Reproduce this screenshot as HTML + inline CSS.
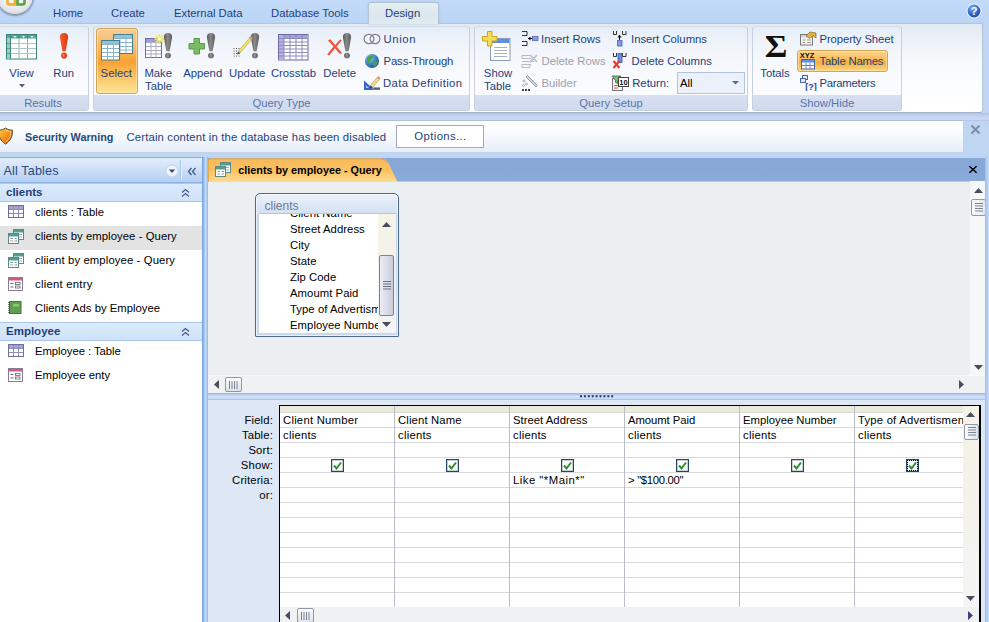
<!DOCTYPE html>
<html>
<head>
<meta charset="utf-8">
<title>clients by employee - Query</title>
<style>
*{box-sizing:border-box;margin:0;padding:0}
html,body{width:989px;height:622px;overflow:hidden}
body{background:#bfd6f3;font-family:"Liberation Sans",sans-serif;font-size:11px;color:#1d3f7c;position:relative}
.abs{position:absolute}
.t{position:absolute;white-space:nowrap;line-height:13px}
/* top tab row */
#tabrow{left:0;top:0;width:989px;height:23px;background:linear-gradient(#c3dafa,#bcd5f5)}
#orb{left:-4px;top:-23px;width:38px;height:38px;border-radius:50%;background:radial-gradient(circle at 50% 40%,#fff 0,#e9edf2 55%,#c8ced8 100%);border:1.500px solid #8595a3;box-shadow:0 1px 2px rgba(70,95,120,.6)}
.tab{font-size:11.3px;color:#1d3f7c;top:7px;z-index:3}
#dtab{left:368px;top:2px;width:71px;height:22px;border:1px solid #b0c6d6;border-bottom:none;border-radius:3px 3px 0 0;background:linear-gradient(#e6eff2 0,#dae7ec 55%,#dfeaf0 100%);z-index:2;box-shadow:0 0 2px rgba(120,150,190,.45)}
/* ribbon */
#ribbon{left:0;top:23px;width:983px;height:90px;background:linear-gradient(#e2ebf1 0,#ecf2f8 20%,#f8fafd 45%,#fff 100%);border-top:1px solid #b4c6d6;border-bottom:1px solid #a3b4c4;border-right:1px solid #b4c6d6;border-radius:0 0 3px 0}
.grp{position:absolute;top:26px;height:85px;border:1px solid #c6d0de;border-top-color:#d6dee9;border-radius:3px;background:linear-gradient(#e4ecf7 0,#eef3fa 15%,#f7f9fd 50%,#fbfcfe 80%);overflow:hidden}
.grp .lab{position:absolute;left:0;right:0;bottom:0;height:15px;background:linear-gradient(#d7dff1,#d1dbef);color:#5876a6;text-align:center;font-size:11.3px;line-height:16px}
.grp .in{position:absolute;left:0;top:0;right:0;bottom:0;border:1px solid rgba(255,255,255,.75);border-radius:2px;pointer-events:none}
.rt{position:absolute;white-space:nowrap;font-size:11.3px;line-height:13px;color:#1d3f7c}
.rt.c{text-align:center;transform:translateX(-50%)}
.rt.dis{color:#9aa2ad}
.hot{position:absolute;border:1px solid #cfa657;border-radius:3px;background:linear-gradient(#f8cb92 0,#fab860 30%,#f9a335 52%,#fbc465 75%,#fde496 100%);box-shadow:inset 0 0 0 1px rgba(255,235,190,.55)}
/* strip under ribbon */
#strip{left:0;top:113px;width:989px;height:8px;background:linear-gradient(#b2c4e5 0,#c6d4f2 45%,#cbd9f6 80%,#adc0df 100%)}
/* security bar */
#sec{left:0;top:120px;width:964px;height:33px;background:linear-gradient(#fff 0,#f7fafd 45%,#edf3fb 75%,#e4edf9 100%);border:1px solid #c3d3ea;border-top-color:#aebfdc;border-left:none}
#optbtn{left:396px;top:125px;width:88px;height:23px;border:1px solid #a3acb9;background:#fff;text-align:center;line-height:21px;font-size:11.3px;color:#1d3f7c;letter-spacing:.4px;padding-left:1px}
/* nav pane */
#nav{left:0;top:157px;width:202px;height:465px;background:#fff;border-top:1px solid #8fb0dc}
#navh{left:0;top:158px;width:202px;height:26px;background:linear-gradient(#e2edfc 0,#d2e2f9 40%,#bfd6f5 75%,#b4cef3 100%);border-bottom:2px solid #8db3e6}
.gh{position:absolute;left:0;width:202px;height:19px;background:linear-gradient(#dcebfd,#d0e2f9);border-top:1px solid #a9c6ec;border-bottom:1px solid #a9c6ec;font-weight:bold;font-size:11.5px;color:#1d3f7c;line-height:17px;padding-left:6px}
.ni{position:absolute;left:0;width:202px;height:24px;font-size:11.3px;color:#000;line-height:21px;padding-left:35px;white-space:nowrap}
.ni.sel{background:#e3e3e3}
.ico{position:absolute}
/* splitter between nav and doc */
#vsplit{left:202px;top:157px;width:6px;height:465px;background:linear-gradient(90deg,#6f9fdc 0,#a5c6f0 40%,#c9dffa 60%,#8db4e6 100%)}
/* doc */
#doctabs{left:208px;top:158px;width:777px;height:24px;background:linear-gradient(#86a7d7,#8aabd9);border-bottom:1px solid #b4c9e8}
#doc{left:208px;top:182px;width:777px;height:211px;background:#eceff2}
#rframe{left:985px;top:157px;width:4px;height:465px;background:linear-gradient(90deg,#9bbbe9 0,#b3cef2 45%,#c6dbf6 100%)}
#hsplit{left:208px;top:393px;width:777px;height:7px;background:linear-gradient(#8eb0e3 0,#b9d2f3 25%,#d5e4f9 55%,#c3d8f5 80%,#9dbce9 100%)}
#low{left:208px;top:400px;width:777px;height:222px;background:#dde7f5}
#grid{left:279px;top:405px;width:701px;height:203px;background:#fff;border-left:1px solid #000;border-top:1px solid #000;overflow:hidden}
.hl{position:absolute;left:0;width:700px;height:1px;background:#d7d9dd}
.vl{position:absolute;top:0;width:1px;height:203px;background:#b9bdca}
.gl{position:absolute;right:716px;font-size:11.3px;letter-spacing:.15px;color:#000;line-height:15px;white-space:nowrap}
.gt{position:absolute;font-size:11.3px;color:#000;line-height:15px;white-space:nowrap}
.cb{position:absolute;width:13px;height:13px;border:1px solid #24446e;background:#fff;box-shadow:inset 0 0 0 .5px rgba(36,68,110,.5)}
.sb{position:absolute;background:#f1f2f4}
.thumb{position:absolute;border:1px solid #8e99a8;border-radius:2px;background:linear-gradient(90deg,#f7f8fa,#dfe3ea)}
</style>
</head>
<body>
<div id="tabrow" class="abs"></div>
<div id="orb" class="abs"></div>
<svg class="ico" style="left:5px;top:0" width="22" height="8" viewBox="0 0 22 8"><path d="M2.500 -1v3.500q0 2 2 2h5.500v-5.500" fill="none" stroke="#f0ae2c" stroke-width="2.600"/><path d="M12.500 -1v5.500h5q2 0 2-2v-3.500" fill="none" stroke="#5da03a" stroke-width="2.600"/></svg>
<div id="dtab" class="abs"></div>
<div class="t tab" style="left:53px">Home</div>
<div class="t tab" style="left:111px">Create</div>
<div class="t tab" style="left:174px">External Data</div>
<div class="t tab" style="left:271px">Database Tools</div>
<div class="t tab" style="left:385px">Design</div>

<div id="ribbon" class="abs"></div>

<!-- groups -->
<div class="grp" style="left:-2px;width:91px"><div class="lab" style="padding-right:1px">Results</div></div>
<div class="grp" style="left:93px;width:377px"><div class="lab">Query Type</div></div>
<div class="grp" style="left:474px;width:274px"><div class="lab">Query Setup</div></div>
<div class="grp" style="left:752px;width:150px"><div class="lab">Show/Hide</div></div>

<!-- Results -->
<svg class="ico" style="left:6px;top:34px" width="31" height="26" viewBox="0 0 31 26">
<rect x="0.5" y="0.5" width="30" height="24.500" fill="#fff" stroke="#3a8276"/>
<rect x="1" y="1" width="29" height="3.500" fill="#57a396"/>
<rect x="1" y="4.500" width="3" height="20" fill="#9ccdc4"/>
<path d="M4.500 1V25" stroke="#3f8a7e" stroke-width="1" fill="none"/>
<path d="M13 4.500V25M21.500 4.500V25" stroke="#86aeb0" stroke-width="1" fill="none"/>
<path d="M13 1V4.500M21.500 1V4.500" stroke="#3f8a7e" stroke-width="1" fill="none"/>
<path d="M5 9.500H30M5 14.500H30M5 19.500H30" stroke="#b3c4c8" stroke-width="1" fill="none"/>
<path d="M1 9.500H4M1 14.500H4M1 19.500H4" stroke="#57a396" stroke-width="1"/>
<path d="M7.500 2l3 0l-1.500 2zM16 2l3 0l-1.500 2zM24.500 2l3 0l-1.500 2z" fill="#e8f5f2"/>
</svg>
<svg class="ico" style="left:58px;top:32px" width="12" height="28" viewBox="0 0 12 28">
<defs><linearGradient id="gg" x1="0" x2="1"><stop offset="0" stop-color="#585858"/><stop offset=".45" stop-color="#8a8a8a"/><stop offset="1" stop-color="#5c5c5c"/></linearGradient><linearGradient id="rg" x1="0" x2="1"><stop offset="0" stop-color="#f0622e"/><stop offset=".5" stop-color="#ee4a1f"/><stop offset="1" stop-color="#d83a14"/></linearGradient></defs>
<path d="M6 1C9 1 10.400 2.800 10.100 5.600L7.600 19.200H4.400L1.900 5.600C1.600 2.800 3 1 6 1Z" fill="url(#rg)"/>
<circle cx="6" cy="23.600" r="3.100" fill="url(#rg)"/>
<circle cx="5.6" cy="23.2" r="1" fill="#f58a5e"/>
</svg>
<div class="rt c" style="left:21.5px;top:67px">View</div>
<svg class="ico" style="left:19px;top:84px" width="6" height="4"><path d="M0 0h6l-3 3.5z" fill="#4c5f85"/></svg>
<div class="rt c" style="left:63.7px;top:67px">Run</div>

<!-- Query Type -->
<div class="hot" style="left:96px;top:28px;width:42px;height:66px"></div>
<svg class="ico" style="left:101px;top:34px" width="32" height="27" viewBox="0 0 32 27">
<g>
<rect x="12.5" y="0.5" width="19" height="19" fill="#fff" stroke="#3e8195"/>
<rect x="13" y="1" width="18" height="3.5" fill="#8fc2d6"/>
<path d="M13 4.5H31M13 8.5H31M13 12.5H31M13 16H31" stroke="#8bb4c6" stroke-width="1"/>
<path d="M19 4.5V19M25 4.5V19" stroke="#8bb4c6" stroke-width="1"/>
</g>
<g>
<rect x="0.5" y="6.5" width="18" height="19.5" fill="#fff" stroke="#3e8195"/>
<rect x="1" y="7" width="17" height="3.5" fill="#8fc2d6"/>
<path d="M1 10.5H18M1 14.5H18M1 18.5H18M1 22.5H18" stroke="#8bb4c6" stroke-width="1"/>
<path d="M6.5 10.5V26M12.5 10.5V26" stroke="#8bb4c6" stroke-width="1"/>
</g>
</svg>
<div class="rt c" style="left:116.3px;top:67px">Select</div>

<svg class="ico" style="left:144px;top:32px" width="30" height="28" viewBox="0 0 30 28">
<rect x="1.5" y="6.5" width="16" height="19" fill="#fff" stroke="#70709f"/>
<rect x="2" y="7" width="15" height="3.5" fill="#9a9cd8"/>
<path d="M2 10.5H17M2 14.5H17M2 18.5H17M2 22H17" stroke="#a9abc9" stroke-width="1"/>
<path d="M7 7V25.5M12 7V25.5" stroke="#a9abc9" stroke-width="1"/>
<path d="M15.5 2v10M10.5 7h10M12 3.5l7 7M19 3.5l-7 7" stroke="#f3e64a" stroke-width="1.6"/>
<circle cx="15.500" cy="7" r="1.800" fill="#fffbd0"/>
<path d="M24.0 1C27.0 1 28.4 2.800 28.1 5.600L25.6 19.200H22.4L19.9 5.600C19.6 2.800 21.0 1 24.0 1Z" fill="url(#gg)"/>
<circle cx="24" cy="23.600" r="2.900" fill="url(#gg)"/>
<circle cx="23.600" cy="23.200" r="1" fill="#9a9a9a"/>
</svg>
<div class="rt c" style="left:158.2px;top:67px">Make</div>
<div class="rt c" style="left:158.5px;top:80px">Table</div>

<svg class="ico" style="left:188px;top:32px" width="30" height="28" viewBox="0 0 30 28">
<path d="M6 6.500h5.500v5h5v5.500h-5v5h-5.500v-5h-5v-5.500h5z" fill="#7dba66" stroke="#5a9a48" stroke-width="1"/>
<path d="M23.0 1C26.0 1 27.4 2.800 27.1 5.600L24.6 19.200H21.4L18.9 5.600C18.6 2.800 20.0 1 23.0 1Z" fill="url(#gg)"/>
<circle cx="23" cy="23.600" r="2.900" fill="url(#gg)"/>
<circle cx="22.600" cy="23.200" r="1" fill="#9a9a9a"/>
</svg>
<div class="rt c" style="left:202.7px;top:67px">Append</div>

<svg class="ico" style="left:232px;top:32px" width="30" height="28" viewBox="0 0 30 28">
<path d="M23.0 1C26.0 1 27.4 2.800 27.1 5.600L24.6 19.200H21.4L18.9 5.600C18.6 2.800 20.0 1 23.0 1Z" fill="url(#gg)"/>
<circle cx="23" cy="23.600" r="2.900" fill="url(#gg)"/>
<circle cx="22.600" cy="23.200" r="1" fill="#9a9a9a"/>
<path d="M1.500 16.500h6M1.500 19h6M1.500 21.500h6M1.500 24h6" stroke="#555" stroke-width="1" stroke-dasharray="1 1.500"/>
<path d="M6.200 19.300L17.700 5.800l1.900 1.600L8.100 20.900z" fill="#f3e560" stroke="#9a8f4a" stroke-width=".5"/>
<path d="M17.500 6l1.500-1.800l2.300 1.900l-1.600 1.800z" fill="#d9a39a" stroke="#8a6a66" stroke-width=".5"/>
<path d="M6 19.500l-1 3l3.200-1.100z" fill="#444"/>
</svg>
<div class="rt c" style="left:247.200px;top:67px">Update</div>

<svg class="ico" style="left:278px;top:34px" width="31" height="27" viewBox="0 0 31 27">
<rect x="0.500" y="0.500" width="29.500" height="25.500" fill="#fff" stroke="#6d6ca6"/>
<rect x="1" y="1" width="28.500" height="3.500" fill="#a3a2d4"/>
<rect x="1" y="1" width="5" height="24.500" fill="#b3b2de"/>
<path d="M6 1V26M12 1V26M18 1V26M24 1V26" stroke="#8d8cc0" stroke-width="1"/>
<path d="M1 4.500H30M1 8H30M1 11.500H30M1 15H30M1 18.500H30M1 22H30" stroke="#8d8cc0" stroke-width="1"/>
</svg>
<div class="rt c" style="left:293.500px;top:67px">Crosstab</div>

<svg class="ico" style="left:325px;top:32px" width="30" height="28" viewBox="0 0 30 28">
<path d="M3 8.500l2.400-1.200l4.800 5.700l5-5.800l1.600 1.200l-5.200 6.200l5.600 6.600l-2.400 .8l-4.800-5.800l-5.800 7.400l-2-1.200l6.300-7.900z" fill="#f0553a"/>
<path d="M22.0 1C25.0 1 26.4 2.800 26.1 5.600L23.6 19.200H20.4L17.9 5.600C17.6 2.800 19.0 1 22.0 1Z" fill="url(#gg)"/>
<circle cx="22" cy="23.600" r="2.900" fill="url(#gg)"/>
<circle cx="21.600" cy="23.200" r="1" fill="#9a9a9a"/>
</svg>
<div class="rt c" style="left:339.700px;top:67px">Delete</div>

<svg class="ico" style="left:363px;top:33px" width="18" height="12" viewBox="0 0 18 12">
<ellipse cx="6" cy="6" rx="4.900" ry="4.600" fill="#f4f6fa" stroke="#7a7c8e" stroke-width="1.200"/>
<ellipse cx="12" cy="6" rx="4.900" ry="4.600" fill="none" stroke="#7a7c8e" stroke-width="1.200"/>
</svg>
<div class="rt" style="left:383.500px;top:33px;letter-spacing:.6px">Union</div>
<svg class="ico" style="left:364px;top:53px" width="16" height="16" viewBox="0 0 16 16">
<defs><radialGradient id="gl" cx=".35" cy=".3" r=".8"><stop offset="0" stop-color="#8fd0f0"/><stop offset=".5" stop-color="#3c86c8"/><stop offset="1" stop-color="#1f4f94"/></radialGradient></defs>
<circle cx="8" cy="8" r="7" fill="url(#gl)"/>
<path d="M3.500 4.500c1.500-2 4-2.500 5.500-2c1 1 .5 2.500-1 3c-1 .5-.5 2-2 2.500c-1.500 .5-1.500 2.500-.5 4c-2-1-3.500-4.500-2-7.500z" fill="#4ea04a"/>
<path d="M10 8c1.500-.5 3 .5 3.500 1.500c-.5 2-2 3.500-3.500 4c-1-1.500-1.500-4 0-5.500z" fill="#4ea04a"/>
</svg>
<div class="rt" style="left:383.500px;top:55px;letter-spacing:-.1px">Pass-Through</div>
<svg class="ico" style="left:363px;top:75px" width="18" height="16" viewBox="0 0 18 16">
<path d="M1 5.500V15H11.500z" fill="#3a66d0"/>
<path d="M3 10.500V13H6z" fill="#b7caf2"/>
<path d="M10 12.500H17V15H10z" fill="#7a8088"/><path d="M12 12.500v1.500M14 12.500v1.500M16 12.500v1.500" stroke="#222" stroke-width=".7"/>
<path d="M7.500 10.500l6.500-8l2.300 1.900l-6.500 8z" fill="#f2d98a" stroke="#a08a4a" stroke-width=".5"/>
<path d="M14 2.500l1.200-1.500l2.300 1.900l-1.200 1.500z" fill="#e58a8a"/>
<path d="M7.500 10.500l-.9 3l3.200-1.100z" fill="#3a3a3a"/>
</svg>
<div class="rt" style="left:383px;top:77px;letter-spacing:.35px">Data Definition</div>

<!-- Query Setup -->
<svg class="ico" style="left:482px;top:30px" width="30" height="32" viewBox="0 0 30 32">
<rect x="8.500" y="8.500" width="19.500" height="22" fill="#fff" stroke="#8a9ab8"/>
<rect x="9" y="9" width="18.500" height="4" fill="#5d8fe4"/>
<path d="M12 17.500h13M12 20.500h13M12 23.500h13M12 26.500h13" stroke="#a8b0bd" stroke-width="1"/>
<path d="M5.500 1.500h4.500v5h5v4.500h-5v5h-4.500v-5h-5v-4.500h5z" fill="#f7dd4f" stroke="#c2a22a" stroke-width="1"/>
</svg>
<div class="rt c" style="left:498px;top:67px">Show</div>
<div class="rt c" style="left:497.500px;top:80px">Table</div>

<svg class="ico" style="left:521px;top:30px" width="18" height="17" viewBox="0 0 18 17">
<path d="M1 1.500h5v4h-5M1 11.500h5v4h-5" fill="none" stroke="#333" stroke-width="1"/>
<path d="M7 8.500h5" stroke="#111" stroke-width="1"/><path d="M7 8.500l2.500-2v4z" fill="#111"/>
<rect x="11.500" y="6.500" width="5.500" height="4" fill="#8b98e8" stroke="#5a64b8" stroke-width=".8"/>
</svg>
<div class="rt" style="left:541px;top:33px">Insert Rows</div>
<svg class="ico" style="left:521px;top:53px" width="18" height="17" viewBox="0 0 18 17" opacity=".75">
<path d="M1 2.500h9M1 5.500h9M1 8.500h12M1 11.500h9M1 14.500h8M1 2.500v3M1 11.500v3M9 11.500v3" stroke="#a2a6ae" stroke-width="1" fill="none"/>
<path d="M9 2l7 7M16 2l-7 7" stroke="#b3b7be" stroke-width="1.800"/>
</svg>
<div class="rt dis" style="left:541.500px;top:55px">Delete Rows</div>
<svg class="ico" style="left:521px;top:74px" width="18" height="18" viewBox="0 0 18 18">
<path d="M6.500 1.500l10 10l-1.500 1.500l-10-10z" fill="#d6d8dc" stroke="#8d9098" stroke-width=".8"/>
<path d="M7.500 3l8 8" stroke="#8d9098" stroke-width=".7" stroke-dasharray="1 1"/>
<circle cx="3" cy="7" r="1" fill="none" stroke="#8d9098" stroke-width=".7"/><circle cx="5.500" cy="10" r="1" fill="none" stroke="#8d9098" stroke-width=".7"/><circle cx="2.500" cy="11.500" r="1" fill="none" stroke="#8d9098" stroke-width=".7"/>
<rect x="1" y="15" width="2" height="2" fill="#444"/><rect x="4" y="15" width="2" height="2" fill="#444"/><rect x="7" y="15" width="2" height="2" fill="#444"/>
</svg>
<div class="rt dis" style="left:541.500px;top:77px">Builder</div>

<svg class="ico" style="left:612px;top:30px" width="16" height="17" viewBox="0 0 16 17">
<path d="M1.500 1v3.500h3v-3.500M10.500 1v3.500h3.500v-3.500" fill="none" stroke="#333" stroke-width="1"/>
<path d="M7.500 5v5" stroke="#111" stroke-width="1"/><path d="M7.500 4.500l-2 3h4z" fill="#111"/>
<rect x="5.500" y="10.500" width="4.500" height="5.500" fill="#7f9be8" stroke="#4a64b8" stroke-width=".8"/>
</svg>
<div class="rt" style="left:631px;top:33px">Insert Columns</div>
<svg class="ico" style="left:612px;top:52px" width="16" height="18" viewBox="0 0 16 18">
<path d="M1.500 1v3.500h3v-3.500M10.500 1v3.500h3.500v-3.500" fill="none" stroke="#333" stroke-width="1"/>
<rect x="6" y="1.500" width="4" height="9" fill="#6f8be0" stroke="#3a54a8" stroke-width=".8"/>
<path d="M1.500 9l6 7M7.500 9l-6 7" stroke="#ee3a2a" stroke-width="2.200"/>
</svg>
<div class="rt" style="left:631.500px;top:55px">Delete Columns</div>
<svg class="ico" style="left:611px;top:75px" width="18" height="16" viewBox="0 0 18 16">
<rect x="1.500" y="3.500" width="10" height="12" fill="#f4f4f4" stroke="#777"/>
<path d="M1 1h9l-3.500 4.500v3l-2 -1v-2z" fill="#7fbf7a" stroke="#444" stroke-width=".7"/>
<path d="M3 10.500h4M3 13h4" stroke="#c55" stroke-width="1"/>
<rect x="7.500" y="2.500" width="10" height="9" fill="#fff" stroke="#444"/>
<text x="12.500" y="10" font-size="7.500" font-weight="bold" text-anchor="middle" font-family="Liberation Sans,sans-serif" fill="#111">10</text>
</svg>
<div class="rt" style="left:632.200px;top:77px">Return:</div>
<div class="abs" style="left:677px;top:72px;width:68px;height:22px;border:1px solid #b3c4dc;background:#eaf1fb"></div>
<div class="rt" style="left:680px;top:77px;color:#000">All</div>
<svg class="ico" style="left:732px;top:81px" width="7" height="4"><path d="M0 0h7l-3.500 3.500z" fill="#5a6b8a"/></svg>

<!-- Show/Hide -->
<div class="rt" style="left:764px;top:28px;width:24px;text-align:center;font-family:'Liberation Serif',serif;font-weight:bold;font-size:31.5px;line-height:38px;color:#111;transform:scaleX(1.1);transform-origin:50% 50%">&Sigma;</div>
<div class="rt c" style="left:775px;top:67px">Totals</div>
<svg class="ico" style="left:799px;top:31px" width="18" height="15" viewBox="0 0 18 15">
<rect x="1.500" y="3.500" width="12" height="10.500" fill="#f8f8f8" stroke="#777"/>
<rect x="2" y="4" width="11" height="2.500" fill="#cfd3da"/>
<path d="M3.500 9h3M3.500 11.500h3M8 9h4M8 11.500h4" stroke="#999" stroke-width="1"/>
<path d="M7 5l4-4l6 1v5l-3-2.500l-3 3z" fill="#e8b43a" stroke="#7a6a2a" stroke-width=".7"/>
</svg>
<div class="rt" style="left:819.500px;top:33px;letter-spacing:-.1px">Property Sheet</div>
<div class="hot" style="left:797px;top:50px;width:91px;height:22px;background:linear-gradient(#fbd48e 0,#fabb59 45%,#f8ad3e 55%,#fcd77a 100%)"></div>
<svg class="ico" style="left:799px;top:51px" width="18" height="19" viewBox="0 0 18 19">
<text x="8" y="6.500" font-size="7.500" font-weight="bold" text-anchor="middle" font-family="Liberation Sans,sans-serif" fill="#111">XYZ</text>
<rect x="2.500" y="8.500" width="13" height="9.500" fill="#fff" stroke="#4a64a8"/>
<rect x="3" y="9" width="12" height="2.500" fill="#5d8fe4"/>
<path d="M3 14.500h12M7 11.500v6M11 11.500v6" stroke="#6b84c4" stroke-width="1"/>
</svg>
<div class="rt" style="left:819.500px;top:55px;letter-spacing:-.2px">Table Names</div>
<svg class="ico" style="left:799px;top:74px" width="18" height="17" viewBox="0 0 18 17">
<rect x="3.500" y="1.500" width="5" height="4" fill="#dfe7fb" stroke="#4a64a8"/>
<rect x="1.500" y="4.500" width="5" height="4" fill="#dfe7fb" stroke="#4a64a8"/>
<text x="12" y="15.500" font-size="9" font-weight="bold" text-anchor="middle" font-family="Liberation Sans,sans-serif" fill="#1d3f9c">[?]</text>
</svg>
<div class="rt" style="left:819.500px;top:77px;letter-spacing:-.25px">Parameters</div>

<!-- help -->
<svg class="ico" style="left:966px;top:3px" width="16" height="16" viewBox="0 0 16 16">
<defs><radialGradient id="hg" cx=".4" cy=".3" r=".8"><stop offset="0" stop-color="#7fb0f0"/><stop offset=".6" stop-color="#2a62c8"/><stop offset="1" stop-color="#1a3f94"/></radialGradient></defs>
<circle cx="8" cy="8" r="7" fill="url(#hg)" stroke="#e8f0fb" stroke-width="1.200"/>
<text x="8" y="12" font-size="11" font-weight="bold" text-anchor="middle" font-family="Liberation Sans,sans-serif" fill="#fff">?</text>
</svg>

<div id="strip" class="abs"></div>
<div id="sec" class="abs"></div>
<div id="optbtn" class="abs">Options...</div>

<svg class="ico" style="left:-3px;top:127px" width="17" height="18" viewBox="0 0 17 18">
<defs><linearGradient id="sh" x1="0" y1="0" x2="1" y2="1"><stop offset="0" stop-color="#ffd64a"/><stop offset=".45" stop-color="#f79a1e"/><stop offset="1" stop-color="#e4581a"/></linearGradient></defs>
<path d="M8.500 1C10.500 2.500 13 3.200 15.500 3.200C15.800 9 13.500 14 8.500 17C3.500 14 1.200 9 1.500 3.200C4 3.200 6.500 2.500 8.500 1Z" fill="url(#sh)" stroke="#5a4a3a" stroke-width="1"/>
<path d="M8.500 2.800C10 3.800 12 4.500 13.800 4.600C13.800 9 12 12.800 8.500 15" fill="none" stroke="#ffe9a0" stroke-width=".8" opacity=".8"/>
</svg>
<div class="t" style="left:25px;top:131px;font-weight:bold;font-size:10.800px;color:#1f4a80">Security Warning</div>
<div class="t" style="left:126.500px;top:131px;font-size:11.300px;color:#1d3f7c;letter-spacing:.16px">Certain content in the database has been disabled</div>
<svg class="ico" style="left:970px;top:124px" width="11" height="11" viewBox="0 0 11 11"><path d="M1.500 1.500l8 8M9.500 1.500l-8 8" stroke="#7f8fa8" stroke-width="2"/></svg>

<div id="nav" class="abs"></div>
<div id="navh" class="abs"></div>

<div class="t" style="left:3.500px;top:164.300px;font-size:12.600px;line-height:15px;color:#2b4a7e;letter-spacing:.15px">All Tables</div>
<svg class="ico" style="left:165px;top:164px" width="14" height="14" viewBox="0 0 14 14"><circle cx="7" cy="7" r="6" fill="#eef4fd" stroke="#c3d3ea" stroke-width="1"/><path d="M3.800 5.500h6.400l-3.200 3.500z" fill="#3f4f6c"/></svg>
<div class="abs" style="left:181px;top:160px;width:1px;height:20px;background:#eef5fe;box-shadow:-1px 0 0 #a8c2e6"></div>
<svg class="ico" style="left:187px;top:167px" width="10" height="9" viewBox="0 0 10 9"><path d="M4.500 1L1.500 4.500L4.500 8M8.500 1L5.500 4.500L8.500 8" fill="none" stroke="#3d5a8c" stroke-width="1.300"/></svg>
<div class="gh" style="top:183px">clients</div>
<svg class="ico" style="left:181px;top:188px" width="9" height="10" viewBox="0 0 9 10"><path d="M1 4.500L4.500 1.500L8 4.500M1 8.500L4.500 5.500L8 8.500" fill="none" stroke="#3d5a8c" stroke-width="1.200"/></svg>
<div class="ni" style="top:202px;letter-spacing:0.06px">clients : Table</div>
<div class="ni sel" style="top:226px;letter-spacing:0.065px">clients by employee - Query</div>
<div class="ni" style="top:250px;letter-spacing:0.12px">cliient by employee - Query</div>
<div class="ni" style="top:274px;letter-spacing:0.25px">client entry</div>
<div class="ni" style="top:298px;letter-spacing:0px">Clients Ads by Employee</div>
<div class="gh" style="top:322px">Employee</div>
<svg class="ico" style="left:181px;top:327px" width="9" height="10" viewBox="0 0 9 10"><path d="M1 4.500L4.500 1.500L8 4.500M1 8.500L4.500 5.500L8 8.500" fill="none" stroke="#3d5a8c" stroke-width="1.200"/></svg>
<div class="ni" style="top:341px;letter-spacing:-0.04px">Employee : Table</div>
<div class="ni" style="top:365px;letter-spacing:0.03px">Employee enty</div>
<svg class="ico" style="left:8px;top:205px" width="16" height="13" viewBox="0 0 16 13">
<rect x=".5" y=".5" width="15" height="12" fill="#fff" stroke="#6d6c9e"/>
<rect x="1" y="1" width="14" height="3" fill="#a5a4d2"/>
<path d="M1 4.500H15M1 8.500H15" stroke="#8d8cbe" stroke-width="1"/><path d="M5.500 1V12M10.500 1V12" stroke="#8d8cbe" stroke-width="1"/>
</svg><svg class="ico" style="left:8px;top:229px" width="16" height="15" viewBox="0 0 16 15">
<rect x="5.500" y=".5" width="10" height="10" fill="#fff" stroke="#5d8a84"/><rect x="6" y="1" width="9" height="2.500" fill="#4f9e90"/>
<path d="M11 5.500h3M11 8h3" stroke="#9ab" stroke-width="1"/>
<rect x=".5" y="4.500" width="10" height="10" fill="#fff" stroke="#5d8a84"/><rect x="1" y="5" width="9" height="2.500" fill="#4f9e90"/>
<path d="M2.500 9.500h2.500M6.500 9.500h2.500M2.500 12h2.500M6.500 12h2.500" stroke="#8a9aa8" stroke-width="1"/>
</svg><svg class="ico" style="left:8px;top:253px" width="16" height="15" viewBox="0 0 16 15">
<rect x="5.500" y=".5" width="10" height="10" fill="#fff" stroke="#5d8a84"/><rect x="6" y="1" width="9" height="2.500" fill="#4f9e90"/>
<path d="M11 5.500h3M11 8h3" stroke="#9ab" stroke-width="1"/>
<rect x=".5" y="4.500" width="10" height="10" fill="#fff" stroke="#5d8a84"/><rect x="1" y="5" width="9" height="2.500" fill="#4f9e90"/>
<path d="M2.500 9.500h2.500M6.500 9.500h2.500M2.500 12h2.500M6.500 12h2.500" stroke="#8a9aa8" stroke-width="1"/>
</svg><svg class="ico" style="left:8px;top:277px" width="15" height="14" viewBox="0 0 15 14">
<rect x=".5" y=".5" width="14" height="13" fill="#fff" stroke="#8a7a9a"/><rect x="1" y="1" width="13" height="2.500" fill="#d4587a"/>
<path d="M2.500 6.500h3M2.500 10h3" stroke="#666" stroke-width="1"/><rect x="7.500" y="5.500" width="4.500" height="2" fill="#fff" stroke="#666" stroke-width=".8"/><rect x="7.500" y="9" width="4.500" height="2" fill="#fff" stroke="#666" stroke-width=".8"/>
</svg><svg class="ico" style="left:8px;top:301px" width="14" height="13" viewBox="0 0 14 13">
<rect x="1.500" y=".5" width="11.500" height="12" fill="#5d9f4f" stroke="#3f7a36"/><rect x="5" y="3" width="6" height="2.500" fill="#8cc47c"/>
<path d="M1 1v11" stroke="#333" stroke-width="1.200" stroke-dasharray="1 1"/>
</svg><svg class="ico" style="left:8px;top:344px" width="16" height="13" viewBox="0 0 16 13">
<rect x=".5" y=".5" width="15" height="12" fill="#fff" stroke="#6d6c9e"/>
<rect x="1" y="1" width="14" height="3" fill="#a5a4d2"/>
<path d="M1 4.500H15M1 8.500H15" stroke="#8d8cbe" stroke-width="1"/><path d="M5.500 1V12M10.500 1V12" stroke="#8d8cbe" stroke-width="1"/>
</svg><svg class="ico" style="left:8px;top:368px" width="15" height="14" viewBox="0 0 15 14">
<rect x=".5" y=".5" width="14" height="13" fill="#fff" stroke="#8a7a9a"/><rect x="1" y="1" width="13" height="2.500" fill="#d4587a"/>
<path d="M2.500 6.500h3M2.500 10h3" stroke="#666" stroke-width="1"/><rect x="7.500" y="5.500" width="4.500" height="2" fill="#fff" stroke="#666" stroke-width=".8"/><rect x="7.500" y="9" width="4.500" height="2" fill="#fff" stroke="#666" stroke-width=".8"/>
</svg>
<div id="vsplit" class="abs"></div>
<div id="doctabs" class="abs"></div>
<div id="doc" class="abs"></div>

<svg class="ico" style="left:208px;top:158px" width="192" height="24" viewBox="0 0 192 24">
<defs><linearGradient id="tg" x1="0" y1="0" x2="0" y2="1"><stop offset="0" stop-color="#f6b95c"/><stop offset=".5" stop-color="#fbc15e"/><stop offset="1" stop-color="#fddc93"/></linearGradient></defs>
<path d="M0 24V3Q0 .5 3 .5H173Q178 .5 180.500 5L189.500 24Z" fill="url(#tg)"/>
<path d="M.5 24V3Q.5 1 3 1H173Q177.500 1 180 5" fill="none" stroke="#e8a84a" stroke-width="1"/>
</svg>
<svg class="ico" style="left:214.5px;top:162px" width="16" height="15" viewBox="0 0 16 15">
<rect x="5.500" y=".5" width="10" height="10" fill="#fff" stroke="#5d8a84"/><rect x="6" y="1" width="9" height="2.500" fill="#4f9e90"/>
<path d="M11 5.500h3M11 8h3" stroke="#9ab" stroke-width="1"/>
<rect x=".5" y="4.500" width="10" height="10" fill="#fff" stroke="#5d8a84"/><rect x="1" y="5" width="9" height="2.500" fill="#4f9e90"/>
<path d="M2.500 9.500h2.500M6.500 9.500h2.500M2.500 12h2.500M6.500 12h2.500" stroke="#8a9aa8" stroke-width="1"/>
</svg>
<div class="t" style="left:238.300px;top:164px;font-weight:bold;font-size:10.800px;color:#000">clients by employee - Query</div>
<svg class="ico" style="left:968px;top:165px" width="10" height="9" viewBox="0 0 10 9"><path d="M1.400 1.300l7.200 6.400M8.600 1.300l-7.200 6.400" stroke="#000" stroke-width="1.500"/></svg>

<!-- upper pane scrollbars -->
<div class="sb" style="left:970px;top:181px;width:15px;height:194px;background:#f6f7f9"></div>
<div class="sb" style="left:208px;top:375px;width:777px;height:18px;background:#f0f1f3;border-top:1px solid #f7f8fa"></div>
<svg class="ico" style="left:974px;top:188px" width="9" height="5"><path d="M4.500 0L9 5H0z" fill="#474d5e"/></svg>
<div class="thumb" style="left:971px;top:199px;width:15px;height:17px;background:linear-gradient(90deg,#fafbfc,#e4e7ee)"></div>
<svg class="ico" style="left:975px;top:203px" width="8" height="9"><path d="M0 .5h8M0 3h8M0 5.500h8M0 8h8" stroke="#7b8494" stroke-width="1"/></svg>
<svg class="ico" style="left:974px;top:365px" width="9" height="5"><path d="M0 0H9L4.500 5z" fill="#474d5e"/></svg>
<svg class="ico" style="left:214px;top:380px" width="5" height="9"><path d="M5 0V9L0 4.500z" fill="#474d5e"/></svg>
<svg class="ico" style="left:959px;top:380px" width="5" height="9"><path d="M0 0V9L5 4.500z" fill="#474d5e"/></svg>
<div class="thumb" style="left:225px;top:377px;width:17px;height:15px;background:linear-gradient(#fafbfc,#dfe3ea)"></div>
<svg class="ico" style="left:229px;top:381px" width="9" height="8"><path d="M.5 0v8M3 0v8M5.500 0v8M8 0v8" stroke="#7b8494" stroke-width="1"/></svg>

<!-- table box -->
<div class="abs" style="left:255px;top:193px;width:144px;height:144px;border:1px solid #4d688f;border-radius:5px 5px 1px 1px;background:linear-gradient(#eaf1fa 0,#d3e1f3 20px,#c4d6ee 21px,#c9daf0 100%);box-shadow:inset 0 0 0 1px rgba(255,255,255,.6)"></div>
<div class="t" style="left:264.500px;top:199px;font-size:12px;line-height:14px;color:#6d7b93">clients</div>
<div class="abs" style="left:259px;top:213px;width:137px;height:120px;background:#fff;overflow:hidden;border-top:1px solid #b9c6d8">
<div class="abs" style="left:0;top:0;width:119px;height:120px;overflow:hidden;font-size:11.300px;letter-spacing:.05px;color:#000;white-space:nowrap;line-height:16px">
<div style="position:absolute;left:31px;top:-9.500px">Client Name<br>Street Address<br>City<br>State<br>Zip Code<br>Amoumt Paid<br>Type of Advertisment<br>Employee Number</div>
</div>
<div class="abs" style="left:119px;top:0;width:18px;height:120px;background:linear-gradient(#f6f4e6 0,#f3f2e9 40%,#f4f5f4 100%)"></div>
<svg class="ico" style="left:123px;top:7.5px" width="9" height="5"><path d="M4.500 0L9 5H0z" fill="#474d5e"/></svg>
<svg class="ico" style="left:123px;top:108px" width="9" height="5"><path d="M0 0H9L4.500 5z" fill="#474d5e"/></svg>
<div class="thumb" style="left:120px;top:41px;width:15px;height:61px;border-color:#7c8296;background:linear-gradient(90deg,#eceef5,#c9ccda)"></div>
<svg class="ico" style="left:124px;top:67px" width="8" height="9"><path d="M0 .5h8M0 3h8M0 5.500h8M0 8h8" stroke="#6b7384" stroke-width="1"/></svg>
</div>

<div id="hsplit" class="abs"></div>
<div id="low" class="abs"></div>
<div id="rframe" class="abs"></div>
<div class="gl" style="top:412.500px">Field:</div>
<div class="gl" style="top:427.500px">Table:</div>
<div class="gl" style="top:442.500px">Sort:</div>
<div class="gl" style="top:457.500px">Show:</div>
<div class="gl" style="top:472.500px">Criteria:</div>
<div class="gl" style="top:487.500px">or:</div>
<div id="grid" class="abs">
<div class="abs" style="left:0;top:0;width:700px;height:7px;background:#ebead9"></div>
<div class="hl" style="top:6px"></div><div class="hl" style="top:21px"></div><div class="hl" style="top:36px"></div><div class="hl" style="top:51px"></div><div class="hl" style="top:66px"></div><div class="hl" style="top:81px"></div><div class="hl" style="top:96px"></div><div class="hl" style="top:111px"></div><div class="hl" style="top:126px"></div><div class="hl" style="top:141px"></div><div class="hl" style="top:156px"></div><div class="hl" style="top:171px"></div><div class="hl" style="top:186px"></div><div class="hl" style="top:201px"></div>
<div class="vl" style="left:114px"></div><div class="vl" style="left:229px"></div><div class="vl" style="left:344px"></div><div class="vl" style="left:459px"></div><div class="vl" style="left:574px"></div>
<div class="gt" style="left:3px;top:6.500px;letter-spacing:0.23px">Client Number</div><div class="gt" style="left:3px;top:21.500px;letter-spacing:0.25px">clients</div>
<div class="cb" style="left:51px;top:53px"><svg width="11" height="11" viewBox="0 0 11 11" style="position:absolute;left:0;top:0"><path d="M2 5.500l2.500 3l4.500-6" fill="none" stroke="#2b8f2b" stroke-width="2"/></svg></div>
<div class="gt" style="left:118px;top:6.500px;letter-spacing:0.14px">Client Name</div><div class="gt" style="left:118px;top:21.500px;letter-spacing:0.25px">clients</div>
<div class="cb" style="left:166px;top:53px"><svg width="11" height="11" viewBox="0 0 11 11" style="position:absolute;left:0;top:0"><path d="M2 5.500l2.500 3l4.500-6" fill="none" stroke="#2b8f2b" stroke-width="2"/></svg></div>
<div class="gt" style="left:233px;top:6.500px;letter-spacing:0.02px">Street Address</div><div class="gt" style="left:233px;top:21.500px;letter-spacing:0.25px">clients</div>
<div class="cb" style="left:281px;top:53px"><svg width="11" height="11" viewBox="0 0 11 11" style="position:absolute;left:0;top:0"><path d="M2 5.500l2.500 3l4.500-6" fill="none" stroke="#2b8f2b" stroke-width="2"/></svg></div>
<div class="gt" style="left:348px;top:6.500px;letter-spacing:-0.06px">Amoumt Paid</div><div class="gt" style="left:348px;top:21.500px;letter-spacing:0.25px">clients</div>
<div class="cb" style="left:396px;top:53px"><svg width="11" height="11" viewBox="0 0 11 11" style="position:absolute;left:0;top:0"><path d="M2 5.500l2.500 3l4.500-6" fill="none" stroke="#2b8f2b" stroke-width="2"/></svg></div>
<div class="gt" style="left:463px;top:6.500px;letter-spacing:0px">Employee Number</div><div class="gt" style="left:463px;top:21.500px;letter-spacing:0.25px">clients</div>
<div class="cb" style="left:511px;top:53px"><svg width="11" height="11" viewBox="0 0 11 11" style="position:absolute;left:0;top:0"><path d="M2 5.500l2.500 3l4.500-6" fill="none" stroke="#2b8f2b" stroke-width="2"/></svg></div>
<div class="gt" style="left:578px;top:6.500px;letter-spacing:0.2px">Type of Advertisment</div><div class="gt" style="left:578px;top:21.500px;letter-spacing:0.25px">clients</div>
<div class="cb" style="left:626px;top:53px"><div style="position:absolute;left:0;top:0;width:11px;height:11px;border:1px dotted #000"></div><svg width="11" height="11" viewBox="0 0 11 11" style="position:absolute;left:0;top:0"><path d="M2 5.500l2.500 3l4.500-6" fill="none" stroke="#2b8f2b" stroke-width="2"/></svg></div>
<div class="gt" style="left:233px;top:66.500px;letter-spacing:0.5px">Like "*Main*"</div>
<div class="gt" style="left:348px;top:66.500px;letter-spacing:-0.3px">&gt; "$100.00"</div>
<div class="abs" style="left:683px;top:0;width:17px;height:203px;background:linear-gradient(#f5f3e6 0,#f3f2e9 40%,#f4f5f5 100%)"></div>
<svg class="ico" style="left:686px;top:6px" width="9" height="5"><path d="M4.500 0L9 5H0z" fill="#474d5e"/></svg>
<div class="thumb" style="left:684px;top:18px;width:15px;height:16px;background:linear-gradient(90deg,#fafbfc,#dfe3ea)"></div>
<svg class="ico" style="left:688px;top:21px" width="8" height="9"><path d="M0 .5h8M0 3h8M0 5.500h8M0 8h8" stroke="#7b8494" stroke-width="1"/></svg>
<svg class="ico" style="left:686px;top:190px" width="9" height="5"><path d="M0 0H9L4.500 5z" fill="#474d5e"/></svg>
</div>
<div class="sb" style="left:280px;top:607px;width:700px;height:15px;background:#f0f1f3"></div>
<div class="abs" style="left:979px;top:405px;width:2px;height:217px;background:#000"></div>
<div class="abs" style="left:279px;top:607px;width:1px;height:15px;background:#000"></div>
<svg class="ico" style="left:285px;top:611px" width="5" height="9"><path d="M5 0V9L0 4.500z" fill="#474d5e"/></svg>
<svg class="ico" style="left:968px;top:611px" width="5" height="9"><path d="M0 0V9L5 4.500z" fill="#3f4478"/></svg>
<div class="thumb" style="left:297px;top:608px;width:17px;height:15px;background:linear-gradient(#fafbfc,#dfe3ea)"></div>
<svg class="ico" style="left:301px;top:612px" width="9" height="8"><path d="M.5 0v8M3 0v8M5.500 0v8M8 0v8" stroke="#7b8494" stroke-width="1"/></svg>
<svg class="ico" style="left:580px;top:394px" width="35" height="5"><path d="M0 2.300h35" stroke="#26324f" stroke-width="2" stroke-dasharray="2 1.900"/></svg>
</body>
</html>
